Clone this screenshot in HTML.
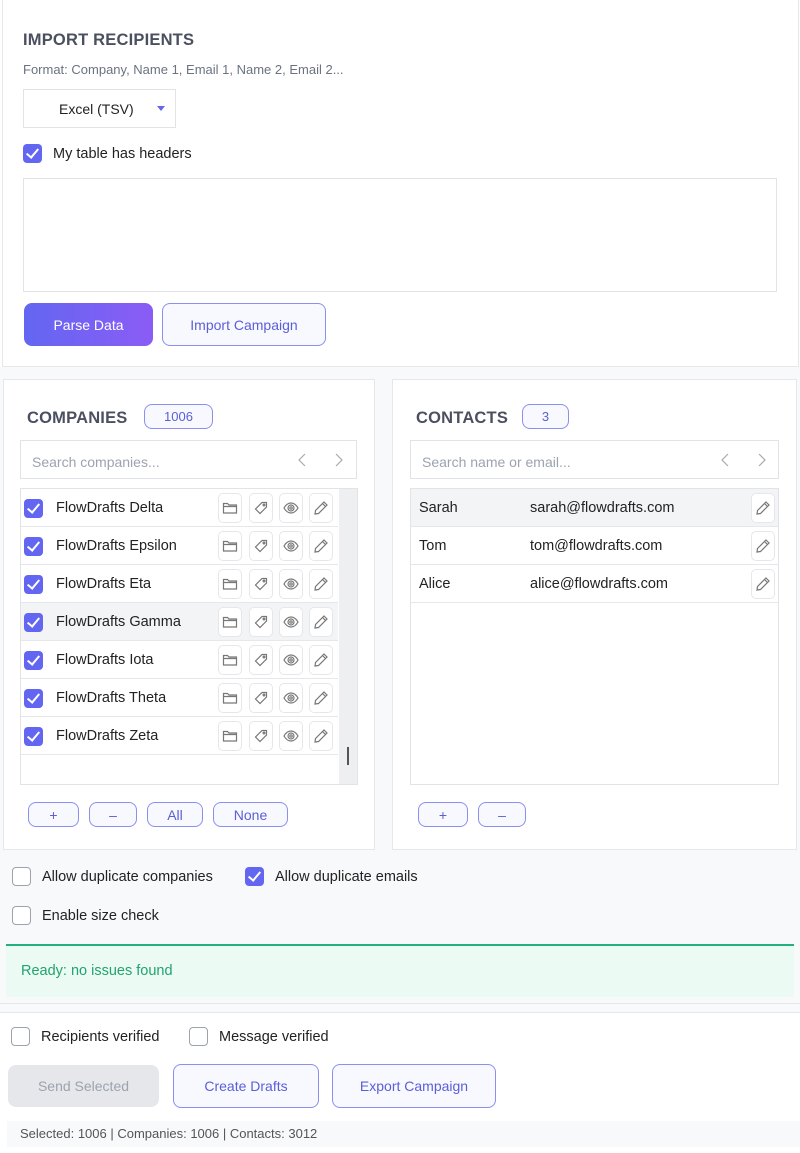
<!DOCTYPE html>
<html><head><meta charset="utf-8"><style>
*{box-sizing:border-box;margin:0;padding:0}
body{width:800px;height:1153px;position:relative;background:#fff;font-family:"Liberation Sans",sans-serif;color:#333;overflow:hidden}
.a{position:absolute}
.cb{position:absolute;width:19px;height:19px;border-radius:4px;background:#6366f1;}
.cb::after{content:"";position:absolute;left:6px;top:2px;width:5px;height:10px;border:solid #fff;border-width:0 2px 2px 0;transform:rotate(40deg)}
.cbo{position:absolute;width:19px;height:19px;border-radius:4px;border:1px solid #9ca3af;background:#fff}
.btn{position:absolute;border:1px solid #8b8ff0;border-radius:8px;background:#f8f8ff;color:#5b5fd6;font-size:14px;display:flex;align-items:center;justify-content:center}
.h{font-weight:bold;font-size:16.5px;color:#4b5060;letter-spacing:.2px}
.row{position:absolute;left:0;height:38px;border-bottom:1px solid #e6e7ea;font-size:14.5px;color:#222}
.ib{position:absolute;top:4px;width:24px;height:30px;border:1px solid #e6e7ea;border-radius:5px;background:#fff}
.ib svg{position:absolute;left:3px;top:6px}
.chev{position:absolute;top:12px}
</style></head><body>
<div class="a" style="left:2px;top:0;width:797px;height:367px;border:1px solid #e6e7ea;border-top:none"></div>
<div class="a h" style="left:23px;top:31px">IMPORT RECIPIENTS</div>
<div class="a" style="left:23px;top:62px;font-size:13px;color:#6b7280">Format: Company, Name 1, Email 1, Name 2, Email 2...</div>
<div class="a" style="left:23px;top:89px;width:153px;height:39px;border:1px solid #e2e3e6;font-size:14px;color:#222"><span class="a" style="left:35px;top:11px">Excel (TSV)</span><span class="a" style="left:133px;top:16px;border:4px solid transparent;border-top:5px solid #6366f1"></span></div>
<div class="cb" style="left:23px;top:144px"></div>
<div class="a" style="left:53px;top:146px;font-size:14.5px;color:#222">My table has headers</div>
<div class="a" style="left:23px;top:178px;width:754px;height:114px;border:1px solid #e2e3e6"></div>
<div class="btn" style="left:24px;top:303px;width:129px;height:43px;background:linear-gradient(90deg,#6366f1,#8b5cf6);border:none;color:#fff">Parse Data</div>
<div class="btn" style="left:162px;top:303px;width:164px;height:43px">Import Campaign</div>
<div class="a" style="left:0;top:367px;width:800px;height:645px;background:#f8f9fa"></div>
<div class="a" style="left:3px;top:379px;width:372px;height:471px;background:#fff;border:1px solid #e6e7ea"></div>
<div class="a h" style="left:27px;top:409px">COMPANIES</div>
<div class="btn" style="left:144px;top:404px;width:69px;height:25px;font-size:13px">1006</div>
<div class="a" style="left:20px;top:440px;width:337px;height:39px;border:1px solid #e2e3e6;background:#fff"><span class="a" style="left:11px;top:13px;font-size:14px;color:#9ca3af">Search companies...</span>
<svg class="chev" style="left:276px" width="10" height="14" viewBox="0 0 10 14" fill="none" stroke="#aaa" stroke-width="1.2"><path d="M8 1L2 7l6 6"/></svg>
<svg class="chev" style="left:313px" width="10" height="14" viewBox="0 0 10 14" fill="none" stroke="#aaa" stroke-width="1.2"><path d="M2 1l6 6-6 6"/></svg></div>
<div class="a" style="left:20px;top:488px;width:338px;height:297px;border:1px solid #e2e3e6;background:#fff;overflow:hidden">
<div class="a" style="left:318px;top:0;width:19px;height:297px;background:#eeeff1"></div>
<div class="a" style="left:326px;top:258px;width:2px;height:18px;background:#555"></div>
</div>
<div id="rows" class="a" style="left:21px;top:489px;width:317px"></div>
<div class="btn" style="left:28px;top:802px;width:51px;height:25px">+</div>
<div class="btn" style="left:89px;top:802px;width:48px;height:25px">–</div>
<div class="btn" style="left:147px;top:802px;width:56px;height:25px">All</div>
<div class="btn" style="left:213px;top:802px;width:75px;height:25px">None</div>
<div class="a" style="left:392px;top:379px;width:405px;height:471px;background:#fff;border:1px solid #e6e7ea"></div>
<div class="a h" style="left:416px;top:409px">CONTACTS</div>
<div class="btn" style="left:522px;top:404px;width:47px;height:25px;font-size:13px">3</div>
<div class="a" style="left:410px;top:440px;width:369px;height:39px;border:1px solid #e2e3e6;background:#fff"><span class="a" style="left:11px;top:13px;font-size:14px;color:#9ca3af">Search name or email...</span>
<svg class="chev" style="left:309px" width="10" height="14" viewBox="0 0 10 14" fill="none" stroke="#aaa" stroke-width="1.2"><path d="M8 1L2 7l6 6"/></svg>
<svg class="chev" style="left:346px" width="10" height="14" viewBox="0 0 10 14" fill="none" stroke="#aaa" stroke-width="1.2"><path d="M2 1l6 6-6 6"/></svg></div>
<div class="a" style="left:410px;top:488px;width:369px;height:297px;border:1px solid #e2e3e6;background:#fff"></div>
<div id="crows" class="a" style="left:411px;top:489px;width:367px"></div>
<div class="btn" style="left:418px;top:802px;width:50px;height:25px">+</div>
<div class="btn" style="left:478px;top:802px;width:48px;height:25px">–</div>
<div class="cbo" style="left:12px;top:867px"></div>
<div class="a" style="left:42px;top:869px;font-size:14.5px;color:#222">Allow duplicate companies</div>
<div class="cb" style="left:245px;top:867px"></div>
<div class="a" style="left:275px;top:869px;font-size:14.5px;color:#222">Allow duplicate emails</div>
<div class="cbo" style="left:12px;top:906px"></div>
<div class="a" style="left:42px;top:908px;font-size:14.5px;color:#222">Enable size check</div>
<div class="a" style="left:6px;top:944px;width:788px;height:53px;background:#ebfbf3;border-top:2px solid #22b07d"></div>
<div class="a" style="left:21px;top:963px;font-size:14.5px;color:#22a36f">Ready: no issues found</div>
<div class="a" style="left:0;top:1003px;width:800px;height:1px;background:#e6e7ea"></div>
<div class="a" style="left:0;top:1012px;width:800px;height:141px;background:#fff;border-top:1px solid #e6e7ea"></div>
<div class="cbo" style="left:11px;top:1027px"></div>
<div class="a" style="left:41px;top:1029px;font-size:14.5px;color:#222">Recipients verified</div>
<div class="cbo" style="left:189px;top:1027px"></div>
<div class="a" style="left:219px;top:1029px;font-size:14.5px;color:#222">Message verified</div>
<div class="btn" style="left:8px;top:1065px;width:151px;height:42px;background:#e5e7eb;border:none;color:#9ca3af">Send Selected</div>
<div class="btn" style="left:173px;top:1064px;width:146px;height:44px">Create Drafts</div>
<div class="btn" style="left:332px;top:1064px;width:164px;height:44px">Export Campaign</div>
<div class="a" style="left:7px;top:1121px;width:793px;height:26px;background:#f8f9fa"></div>
<div class="a" style="left:20px;top:1126px;font-size:13px;color:#555">Selected: 1006 | Companies: 1006 | Contacts: 3012</div>
<script>
var folder='<svg width="16" height="16" viewBox="0 0 16 16" fill="none" stroke="#777" stroke-width="1.2"><path d="M1.5 3.5h4l1.5 1.5h7.5v8h-13z M1.5 6.5h13"/></svg>';
var tag='<svg width="16" height="16" viewBox="0 0 16 16" fill="none" stroke="#777" stroke-width="1.2"><path d="M9 2.5h4.5v4.5l-6.5 6.5-4.5-4.5z"/><circle cx="11" cy="5" r="0.9"/></svg>';
var eye='<svg width="16" height="16" viewBox="0 0 16 16" fill="none" stroke="#777" stroke-width="1.2"><path d="M1 8c2-3.5 4.5-5 7-5s5 1.5 7 5c-2 3.5-4.5 5-7 5s-5-1.5-7-5z"/><circle cx="8" cy="8" r="3"/><circle cx="8" cy="8" r="1.2"/></svg>';
var pen='<svg width="16" height="16" viewBox="0 0 16 16" fill="none" stroke="#777" stroke-width="1.2"><path d="M11 2l3 3-8.5 8.5-3.5 0.5 0.5-3.5z M9.5 3.5l3 3"/></svg>';
var names=["Delta","Epsilon","Eta","Gamma","Iota","Theta","Zeta"],h='';
names.forEach(function(n,i){h+='<div class="row" style="top:'+(i*38)+'px;width:317px;'+(n=="Gamma"?'background:#f3f4f6':'')+'"><div class="cb" style="left:3px;top:10px"></div><span class="a" style="left:35px;top:11px">FlowDrafts '+n+'</span>'+
'<div class="ib" style="left:197px">'+folder+'</div><div class="ib" style="left:228px">'+tag+'</div><div class="ib" style="left:258px">'+eye+'</div><div class="ib" style="left:288px">'+pen+'</div></div>';});
document.getElementById('rows').innerHTML=h;
var c=[["Sarah","sarah@flowdrafts.com"],["Tom","tom@flowdrafts.com"],["Alice","alice@flowdrafts.com"]];h='';
c.forEach(function(r,i){h+='<div class="row" style="top:'+(i*38)+'px;width:367px;'+(i==0?'background:#f3f4f6':'')+'"><span class="a" style="left:8px;top:11px">'+r[0]+'</span><span class="a" style="left:119px;top:11px">'+r[1]+'</span><div class="ib" style="left:340px">'+pen+'</div></div>';});
document.getElementById('crows').innerHTML=h;
</script>
</body></html>
